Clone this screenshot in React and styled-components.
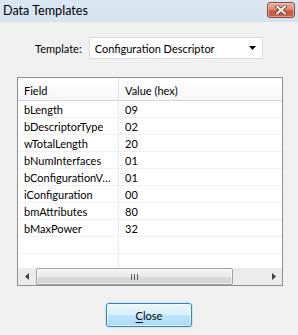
import React from "react";
import styled, { createGlobalStyle } from "styled-components";

const Global = createGlobalStyle`
  html, body { margin: 0; padding: 0; background: #f0f0f0; }
  body { font-family: Lato, "Noto Sans", sans-serif; font-size: 11px; color: #000; }
`;

const Window = styled.div`
  width: 298px;
  height: 335px;
  background: #f0f0f0;
  display: flex;
  flex-direction: column;
  overflow: hidden;
`;

const TitleBar = styled.div`
  height: 22px;
  flex: none;
  display: flex;
  align-items: center;
  justify-content: space-between;
  padding: 0 3px 0 3px;
  background: linear-gradient(#dbe6f3, #d6e2f0);
  box-sizing: border-box;
`;

const Title = styled.span`
  font-size: 12.6px;
  color: #000;
  margin-top: -2px;
`;

const CloseX = styled.div`
  width: 28px;
  height: 16px;
  box-sizing: border-box;
  border: 1px solid #8e4638;
  border-radius: 3px;
  background: linear-gradient(#eab0a4 0%, #dc8a79 45%, #c85b45 55%, #c9604a 100%);
  display: flex;
  align-items: center;
  justify-content: center;
  margin-top: -2px;
  box-shadow: inset 0 0 0 1px rgba(255, 220, 210, 0.5);
`;

const Body = styled.div`
  flex: 1;
  display: flex;
  flex-direction: column;
  padding: 15px 15px 0 17px;
`;

const TemplateRow = styled.div`
  display: flex;
  align-items: center;
  gap: 7px;
  padding-left: 18px;
  height: 22px;
`;

const Label = styled.span`
  font-size: 11px;
`;

const Select = styled.div`
  width: 174px;
  height: 22px;
  box-sizing: border-box;
  border: 1px solid #dcdcdc;
  background: #fff;
  display: flex;
  align-items: center;
  justify-content: space-between;
  padding: 0 6px 0 5px;
`;

const ListBox = styled.div`
  margin-top: 18px;
  width: 266px;
  height: 209px;
  box-sizing: border-box;
  border: 1px solid #8f8f8f;
  background: #fff;
  display: flex;
  flex-direction: column;
`;

const Header = styled.div`
  height: 23px;
  flex: none;
  box-sizing: border-box;
  display: grid;
  grid-template-columns: 101px 1fr;
  border-bottom: 1px solid #d5d5d5;
  background: linear-gradient(#ffffff, #f5f6f8);
`;

const HeadCell = styled.div`
  display: flex;
  align-items: center;
  padding: 2px 0 0 6px;
  border-right: ${(p) => (p.$first ? "1px solid #e3e3e3" : "none")};
`;

const Rows = styled.div`
  flex: 1;
  overflow: hidden;
  display: flex;
  flex-direction: column;
`;

const Row = styled.div`
  height: 17px;
  flex: none;
  box-sizing: border-box;
  display: grid;
  grid-template-columns: 101px 1fr;
  border-bottom: 1px solid #f0f0f0;
`;

const Cell = styled.div`
  display: flex;
  align-items: center;
  padding: 1px 3px 0 6px;
  min-width: 0;
  border-right: ${(p) => (p.$first ? "1px solid #e8e8e8" : "none")};
`;

const CellText = styled.span`
  overflow: hidden;
  text-overflow: ellipsis;
  white-space: nowrap;
`;

const HScroll = styled.div`
  height: 17px;
  flex: none;
  display: flex;
  background: #ebebeb;
`;

const ArrowBtn = styled.div`
  width: 17px;
  height: 17px;
  display: flex;
  align-items: center;
  justify-content: center;
`;

const Track = styled.div`
  flex: 1;
  display: flex;
  align-items: stretch;
  padding: 0 0 0 1px;
`;

const Thumb = styled.div`
  width: 197px;
  box-sizing: border-box;
  border: 1px solid #a3a3a3;
  border-radius: 2px;
  background: linear-gradient(#f4f4f4 0%, #e9e9e9 50%, #d9d9d9 51%, #d3d3d3 100%);
  display: flex;
  align-items: center;
  justify-content: center;
  box-shadow: inset 0 0 0 1px rgba(255,255,255,0.6);
`;

const Grip = styled.div`
  display: flex;
  gap: 2px;
  & > i {
    display: block;
    width: 1px;
    height: 6px;
    background: #5a5a5a;
  }
`;

const Footer = styled.div`
  display: flex;
  justify-content: center;
  margin-top: 17px;
  margin-left: -2px;
`;

const Button = styled.button`
  width: 86px;
  height: 24px;
  box-sizing: border-box;
  border: 1px solid #3c7fb1;
  border-radius: 3px;
  background: linear-gradient(#e9f6fd 0%, #d9f0fc 50%, #bee6fd 51%, #a7d9f5 100%);
  box-shadow: inset 0 0 0 1px rgba(255,255,255,0.7), 0 0 2px #7ecbf5;
  font-family: Lato, "Noto Sans", sans-serif;
  font-size: 11px;
  color: #000;
  padding: 0;
  & u { text-decoration: underline; text-underline-offset: 2px; }
`;

const rows = [
  ["bLength", "09"],
  ["bDescriptorType", "02"],
  ["wTotalLength", "20"],
  ["bNumInterfaces", "01"],
  ["bConfigurationValue", "01"],
  ["iConfiguration", "00"],
  ["bmAttributes", "80"],
  ["bMaxPower", "32"],
  ["", ""],
  ["", ""],
];

export default function App() {
  return (
    <>
      <Global />
      <Window>
        <TitleBar>
          <Title>Data Templates</Title>
          <CloseX>
            <svg width="12" height="10" viewBox="0 0 12 10">
              <path d="M2 1.5 L10 8.5 M10 1.5 L2 8.5" stroke="#5a2a22" strokeWidth="3.4" strokeLinecap="square" />
              <path d="M2 1.5 L10 8.5 M10 1.5 L2 8.5" stroke="#ffffff" strokeWidth="2" strokeLinecap="square" />
            </svg>
          </CloseX>
        </TitleBar>
        <Body>
          <TemplateRow>
            <Label>Template:</Label>
            <Select>
              <span>Configuration Descriptor</span>
              <svg width="7" height="4" viewBox="0 0 7 4">
                <path d="M0 0 H7 L3.5 4 Z" fill="#000" />
              </svg>
            </Select>
          </TemplateRow>
          <ListBox>
            <Header>
              <HeadCell $first>Field</HeadCell>
              <HeadCell>Value (hex)</HeadCell>
            </Header>
            <Rows>
              {rows.map(([f, v], i) => (
                <Row key={i}>
                  <Cell $first><CellText>{f}</CellText></Cell>
                  <Cell><CellText>{v}</CellText></Cell>
                </Row>
              ))}
            </Rows>
            <HScroll>
              <ArrowBtn>
                <svg width="4" height="7" viewBox="0 0 4 7"><path d="M4 0 V7 L0 3.5 Z" fill="#404040" /></svg>
              </ArrowBtn>
              <Track>
                <Thumb>
                  <Grip><i /><i /><i /></Grip>
                </Thumb>
              </Track>
              <ArrowBtn>
                <svg width="4" height="7" viewBox="0 0 4 7"><path d="M0 0 V7 L4 3.5 Z" fill="#404040" /></svg>
              </ArrowBtn>
            </HScroll>
          </ListBox>
          <Footer>
            <Button><u>C</u>lose</Button>
          </Footer>
        </Body>
      </Window>
    </>
  );
}
